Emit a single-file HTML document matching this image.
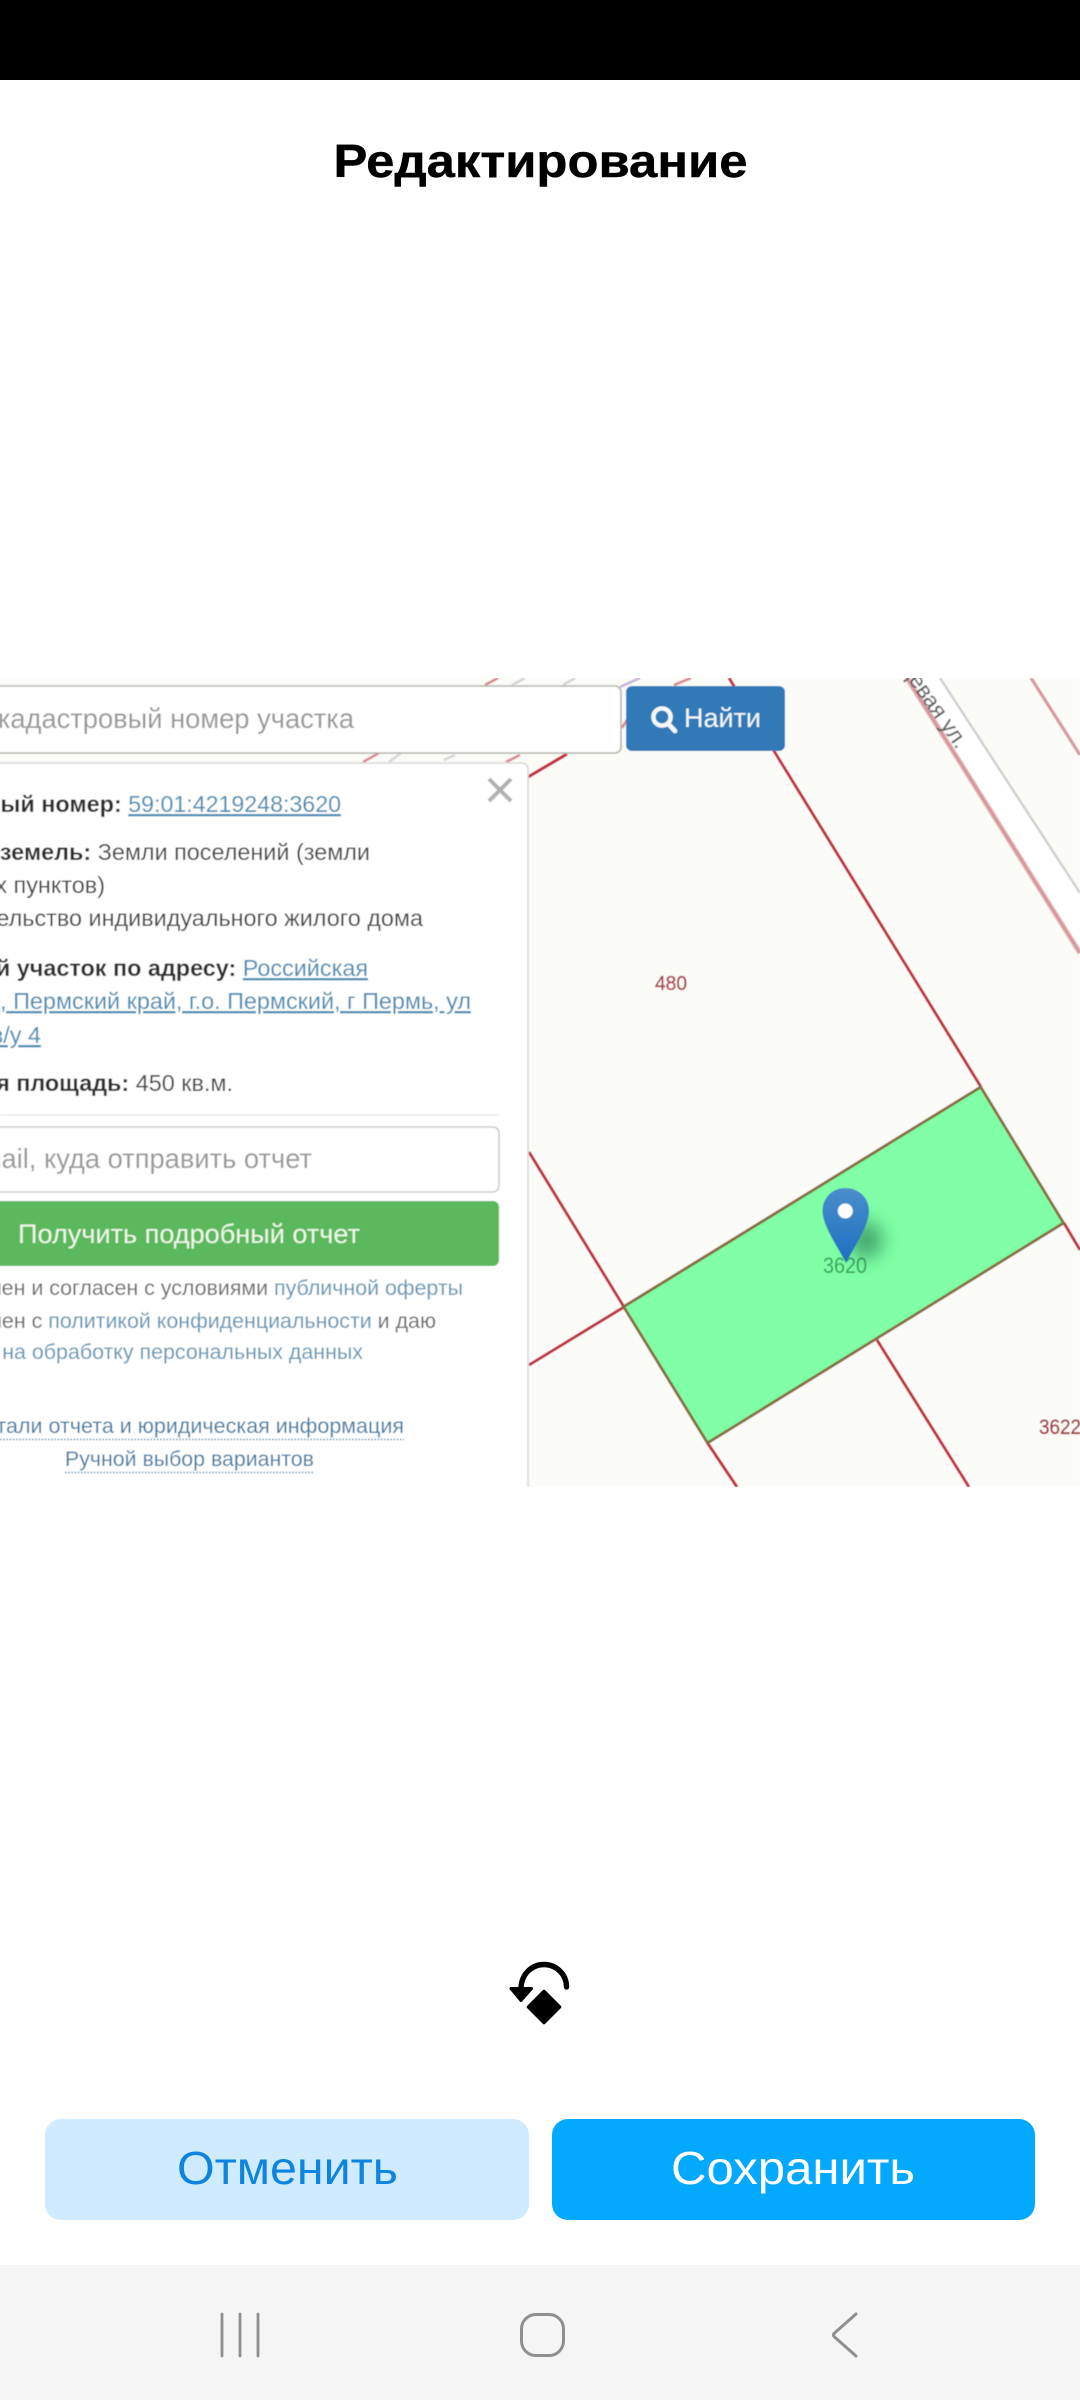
<!DOCTYPE html>
<html lang="ru"><head><meta charset="utf-8"><title>Редактирование</title>
<style>
html,body{margin:0;padding:0;background:#fff;width:1080px;height:2400px;overflow:hidden}
svg{display:block;font-family:"Liberation Sans","Noto Sans CJK SC",sans-serif}
</style></head><body>
<svg width="1080" height="2400" viewBox="0 0 1080 2400" xmlns="http://www.w3.org/2000/svg">
<defs>
<clipPath id="m"><rect x="0" y="678" width="1080" height="809"/></clipPath>
<filter id="b" x="-5%" y="-5%" width="110%" height="110%"><feGaussianBlur stdDeviation="0.6"/></filter>
<filter id="s" x="-100%" y="-100%" width="300%" height="300%"><feGaussianBlur stdDeviation="9"/></filter>
<linearGradient id="pin" x1="0" y1="0" x2="0" y2="1"><stop offset="0" stop-color="#4a8ecb"/><stop offset="1" stop-color="#1d6fc0"/></linearGradient>
</defs>
<rect width="1080" height="80" fill="#000"/>
<text x="540.5" y="177" text-anchor="middle" font-size="46.5" font-weight="700" fill="#000" stroke="#000" stroke-width=".4" textLength="414" lengthAdjust="spacingAndGlyphs">Редактирование</text>

<g clip-path="url(#m)"><g filter="url(#b)">
<rect x="0" y="678" width="1080" height="809" fill="#fbfbf7"/>
<!-- road -->
<polygon points="907,678 940,678 1080,893 1080,953" fill="#fff"/>
<g fill="none" stroke-linecap="butt">
<path d="M907 678L1080 953" stroke="#e2adb1" stroke-width="5"/>
<path d="M907 678L1080 953" stroke="#cf8e94" stroke-width="1.6"/>
<path d="M940 678L1080 893" stroke="#cfcfcf" stroke-width="2.5"/>
<path d="M1031 678L1080 755" stroke="#d8999f" stroke-width="3.2"/>
<g stroke="#bd2f3c" stroke-width="3">
<path d="M729 678L981 1087"/>
<path d="M529 1152L624 1307"/>
<path d="M529 1365L624 1307"/>
<path d="M877 1340L969 1487"/>
<path d="M707.5 1443L737 1487"/>
<path d="M1064 1223L1080 1250"/>
</g>
<path d="M528 777L567 754" stroke="#c22f3e" stroke-width="3.2"/>
<path d="M485 685L498 678M674 685L691 678M363 762L379 753M506 762L520 755M622 728L628 718" stroke="#d98a90" stroke-width="2.6"/>
<path d="M512 685L525 678M563 685L575 678M389 762L401 753M444 760L455 755" stroke="#d6d6d6" stroke-width="2.6"/>
<path d="M620 687L640 678" stroke="#c9b4d6" stroke-width="2.6"/>
</g>
<polygon points="980.7,1087 1063.6,1223 707.5,1443 623.6,1306.7" fill="#80ffa6" stroke="#866a3e" stroke-width="2.8"/>
<text x="957" y="750" transform="rotate(55 957 750)" text-anchor="end" font-size="22.5" fill="#555">Кольцевая ул.</text>
<text x="655" y="990" font-size="20.5" fill="#ab3741" stroke="#ab3741" stroke-width=".3" textLength="32" lengthAdjust="spacingAndGlyphs">480</text>
<text x="823" y="1273" font-size="22" fill="#38a058" textLength="44" lengthAdjust="spacingAndGlyphs">3620</text>
<text x="1039" y="1434" font-size="21" fill="#9e3640" stroke="#9e3640" stroke-width=".3" textLength="42" lengthAdjust="spacingAndGlyphs">3622</text>
<ellipse cx="866" cy="1240" rx="17" ry="19" fill="#1e6e4a" opacity=".6" filter="url(#s)"/>
<path d="M845.5 1188C832 1188 822.5 1198 822.5 1211C822.5 1226 838 1247 846 1263C854 1247 869 1226 869 1211C869 1198 859 1188 845.5 1188Z" fill="url(#pin)"/>
<circle cx="845.3" cy="1211" r="7.5" fill="#fff"/>

<!-- search input -->
<rect x="-20" y="686" width="641" height="67" rx="6" fill="#fff" stroke="#b4b4ac" stroke-width="1.6"/>
<text x="354" y="728" text-anchor="end" font-size="27.3" fill="#999">Введите кадастровый номер участка</text>
<!-- find button -->
<rect x="626" y="686" width="159" height="65" rx="6" fill="#337ab7"/>
<circle cx="662" cy="717" r="8.6" fill="none" stroke="#f4f8fb" stroke-width="4.4"/>
<path d="M668 723.5L675 731" stroke="#f4f8fb" stroke-width="4.6" stroke-linecap="round"/>
<text x="684" y="727" font-size="26.5" fill="#f4f8fb" textLength="77" lengthAdjust="spacingAndGlyphs">Найти</text>

<!-- panel -->
<rect x="-20" y="763" width="548" height="760" rx="6" fill="#fff" stroke="#d8d8d8" stroke-width="1.6"/>
<path d="M489 779L511 801M511 779L489 801" stroke="#b0b0b0" stroke-width="4"/>
<g font-size="23.4" fill="#444">
<text x="341" y="812" text-anchor="end"><tspan font-weight="700" fill="#2e2e2e">Кадастровый номер: </tspan><tspan fill="#4b8bb3" text-decoration="underline" font-size="23.2">59:01:4219248:3620</tspan></text>
<text x="370" y="860" text-anchor="end"><tspan font-weight="700" fill="#2e2e2e">Категория земель: </tspan>Земли поселений (земли</text>
<text x="105" y="893" text-anchor="end">населенных пунктов)</text>
<text x="423" y="926" text-anchor="end">Строительство индивидуального жилого дома</text>
<text x="368" y="976" text-anchor="end"><tspan font-weight="700" fill="#2e2e2e">Земельный участок по адресу: </tspan><tspan fill="#4b8bb3" text-decoration="underline">Российская</tspan></text>
<text x="471" y="1009" text-anchor="end" fill="#4b8bb3" text-decoration="underline">Федерация, Пермский край, г.о. Пермский, г Пермь, ул</text>
<text x="41" y="1043" text-anchor="end" fill="#4b8bb3" text-decoration="underline">в/у 4</text>
<text x="233" y="1091" text-anchor="end"><tspan font-weight="700" fill="#2e2e2e">Кадастровая площадь: </tspan>450 кв.м.</text>
</g>
<rect x="0" y="1114" width="499" height="2" fill="#eee"/>
<rect x="-20" y="1127" width="519" height="65" rx="6" fill="#fff" stroke="#ccc" stroke-width="1.6"/>
<text x="312" y="1168" text-anchor="end" font-size="27.3" fill="#999">Укажите email, куда отправить отчет</text>
<rect x="-20" y="1201" width="519" height="65" rx="6" fill="#5cb85c"/>
<text x="18" y="1243" font-size="27" fill="#eef8e8" textLength="342" lengthAdjust="spacingAndGlyphs">Получить подробный отчет</text>
<g font-size="21.4" fill="#6c6c6c">
<text x="463" y="1295" text-anchor="end">Ознакомлен и согласен с условиями <tspan fill="#6595b6">публичной оферты</tspan></text>
<text x="436" y="1328" text-anchor="end">Ознакомлен с <tspan fill="#6595b6">политикой конфиденциальности</tspan> и даю</text>
<text x="363" y="1359" text-anchor="end" fill="#6595b6">согласие на обработку персональных данных</text>
</g>
<g font-size="21.5" fill="#447ca3">
<text x="404" y="1433" text-anchor="end">Детали отчета и юридическая информация</text>
<text x="65" y="1466" textLength="249" lengthAdjust="spacingAndGlyphs">Ручной выбор вариантов</text>
</g>
<path d="M0 1439.5H404M65 1472.5H314" stroke="#5a8fb3" stroke-width="1.6" stroke-dasharray="1.6 1.6"/>
</g></g>

<!-- rotate icon -->
<path d="M521 1989C521 1974 532 1964.5 544 1964.5C556 1964.5 566.5 1974 566.5 1987" fill="none" stroke="#000" stroke-width="5.4" stroke-linecap="round"/>
<path d="M511 1988.5H531.5L521 2000.5Z" fill="#000" stroke="#000" stroke-width="3" stroke-linejoin="round"/>
<path d="M544 1991.5L559.5 2007L544 2022.5L528.5 2007Z" fill="#000" stroke="#000" stroke-width="3.5" stroke-linejoin="round"/>

<!-- buttons -->
<rect x="45" y="2119" width="484" height="101" rx="16" fill="#d0ebff"/>
<rect x="552" y="2119" width="483" height="101" rx="16" fill="#03a9ff"/>
<text x="287.5" y="2184" text-anchor="middle" font-size="46" fill="#0d84e0" textLength="221" lengthAdjust="spacingAndGlyphs">Отменить</text>
<text x="793" y="2184" text-anchor="middle" font-size="46" fill="#fff" textLength="244" lengthAdjust="spacingAndGlyphs">Сохранить</text>

<!-- nav bar -->
<rect x="0" y="2265" width="1080" height="135" fill="#f5f5f5"/>
<path d="M222 2314V2356M240 2314V2356M258 2314V2356" stroke="#8f8f8f" stroke-width="2.8" stroke-linecap="round"/>
<rect x="521.5" y="2314.5" width="42" height="41" rx="14.5" fill="none" stroke="#8f8f8f" stroke-width="3"/>
<path d="M856 2314L834 2333.5Q833 2335 834 2336.5L856 2356" fill="none" stroke="#8f8f8f" stroke-width="3" stroke-linecap="round" stroke-linejoin="round"/>
</svg>
</body></html>
